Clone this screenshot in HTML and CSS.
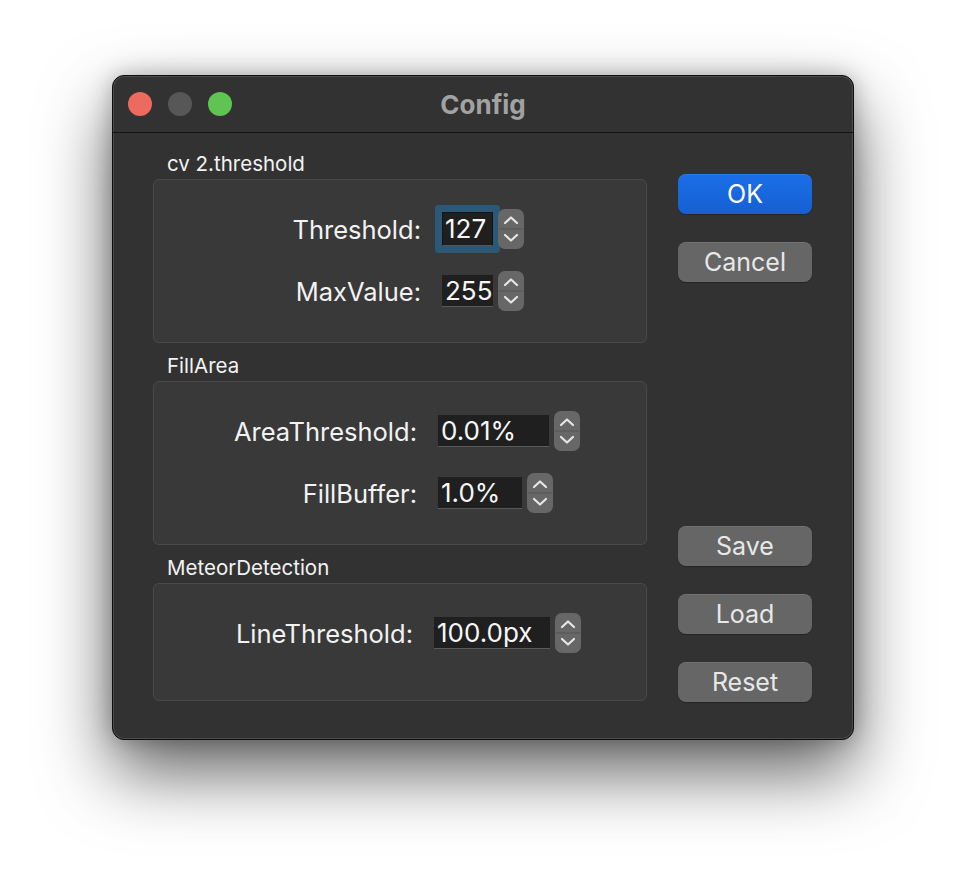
FILE: index.html
```html
<!DOCTYPE html>
<html>
<head>
<meta charset="utf-8">
<title>Config</title>
<link rel="stylesheet" href="styles.css">
</head>
<body>
<div class="stage">
  <div class="window">
    <div class="titlebar">
      <div class="lights">
        <span class="light light-red"></span>
        <span class="light light-grey"></span>
        <span class="light light-green"></span>
      </div>
      <div class="title">Config</div>
      <div class="title-spacer"></div>
    </div>
    <div class="content">
      <div class="groups">
        <section class="group">
          <div class="group-title">cv 2.threshold</div>
          <div class="group-box box-tall labels-a">
            <div class="row">
              <span class="field-label">Threshold:</span>
              <span class="input input-s focused">127</span>
              <span class="stepper"><svg viewBox="0 0 26 40" width="26" height="40"><line x1="1" y1="20" x2="25" y2="20" class="div"/><polyline points="7,14 13,8.5 19,14" class="chev"/><polyline points="7,26 13,31.5 19,26" class="chev"/></svg></span>
            </div>
            <div class="row">
              <span class="field-label">MaxValue:</span>
              <span class="input input-s">255</span>
              <span class="stepper"><svg viewBox="0 0 26 40" width="26" height="40"><line x1="1" y1="20" x2="25" y2="20" class="div"/><polyline points="7,14 13,8.5 19,14" class="chev"/><polyline points="7,26 13,31.5 19,26" class="chev"/></svg></span>
            </div>
          </div>
        </section>
        <section class="group">
          <div class="group-title">FillArea</div>
          <div class="group-box box-tall labels-b">
            <div class="row">
              <span class="field-label">AreaThreshold:</span>
              <span class="input input-l">0.01%</span>
              <span class="stepper"><svg viewBox="0 0 26 40" width="26" height="40"><line x1="1" y1="20" x2="25" y2="20" class="div"/><polyline points="7,14 13,8.5 19,14" class="chev"/><polyline points="7,26 13,31.5 19,26" class="chev"/></svg></span>
            </div>
            <div class="row">
              <span class="field-label">FillBuffer:</span>
              <span class="input input-m">1.0%</span>
              <span class="stepper"><svg viewBox="0 0 26 40" width="26" height="40"><line x1="1" y1="20" x2="25" y2="20" class="div"/><polyline points="7,14 13,8.5 19,14" class="chev"/><polyline points="7,26 13,31.5 19,26" class="chev"/></svg></span>
            </div>
          </div>
        </section>
        <section class="group">
          <div class="group-title">MeteorDetection</div>
          <div class="group-box box-short labels-c">
            <div class="row">
              <span class="field-label">LineThreshold:</span>
              <span class="input input-xl">100.0px</span>
              <span class="stepper"><svg viewBox="0 0 26 40" width="26" height="40"><line x1="1" y1="20" x2="25" y2="20" class="div"/><polyline points="7,14 13,8.5 19,14" class="chev"/><polyline points="7,26 13,31.5 19,26" class="chev"/></svg></span>
            </div>
          </div>
        </section>
      </div>
      <div class="buttons">
        <div class="btn-group">
          <button class="btn btn-primary">OK</button>
          <button class="btn">Cancel</button>
        </div>
        <div class="btn-group">
          <button class="btn">Save</button>
          <button class="btn">Load</button>
          <button class="btn">Reset</button>
        </div>
      </div>
    </div>
  </div>
</div>
</body>
</html>
```
FILE: styles.css
```css
html, body {
  margin: 0;
  padding: 0;
  background: #ffffff;
}
body {
  font-family: Inter, "Liberation Sans", sans-serif;
  width: 966px;
  height: 888px;
  overflow: hidden;
}
.stage {
  padding: 75px 0 0 112px;
}
.window {
  box-sizing: border-box;
  width: 742px;
  height: 665px;
  background: #323232;
  border: 1px solid #0e0e0e;
  border-radius: 12px;
  box-shadow: inset 0 0 0 1px #4c4c4c, 0 32px 70px rgba(0,0,0,0.62), 0 0 22px rgba(0,0,0,0.25);
  display: flex;
  flex-direction: column;
}
.titlebar {
  box-sizing: border-box;
  height: 57px;
  border-bottom: 1px solid #141414;
  display: grid;
  grid-template-columns: 1fr auto 1fr;
  align-items: center;
}
.lights {
  display: flex;
  gap: 16px;
  padding-left: 15px;
}
.light {
  width: 24px;
  height: 24px;
  border-radius: 50%;
  display: block;
}
.light-red { background: #ec6a5e; }
.light-grey { background: #575757; }
.light-green { background: #5fc452; }
.title {
  font-weight: 700;
  font-size: 26px;
  color: #a2a2a2;
}
.content {
  flex: 1;
  display: flex;
  gap: 31px;
  padding: 0 41px 0 40px;
}
.groups {
  width: 494px;
  padding-top: 19px;
  display: flex;
  flex-direction: column;
  gap: 11px;
}
.group-title {
  font-size: 20.5px;
  line-height: 24px;
  color: #f2f2f2;
  padding-left: 14px;
  margin-bottom: 3px;
}
.group-box {
  box-sizing: border-box;
  background: #393939;
  border: 1px solid #4a4a4a;
  border-radius: 6px;
  padding-top: 29px;
  display: flex;
  flex-direction: column;
  gap: 22px;
}
.box-tall { height: 164px; }
.box-short { height: 118px; }
.row {
  display: flex;
  align-items: center;
  height: 40px;
}
.field-label {
  text-align: right;
  font-size: 25.5px;
  color: #f2f2f2;
  margin-right: 21px;
}
.labels-a .field-label { width: 267px; }
.labels-b .field-label { width: 263px; }
.labels-c .field-label { width: 259px; }
.input {
  box-sizing: border-box;
  height: 32px;
  background: #1f1f1f;
  border-bottom: 1px solid #5a5a5a;
  color: #f6f6f6;
  font-size: 26px;
  line-height: 31px;
  padding-left: 3px;
  margin-right: 5px;
  white-space: nowrap;
  overflow: hidden;
}
.input-s { width: 51px; }
.input-m { width: 84px; }
.input-l { width: 111px; }
.input-xl { width: 116px; }
.focused {
  height: 34px;
  border-radius: 1px;
  border: 1px solid #151515;
  border-bottom-color: #555;
  padding-left: 2px;
  box-shadow: 0 0 0 7px #2c5878;
}
.stepper {
  width: 26px;
  height: 40px;
  border-radius: 7px;
  background: #676767;
  display: block;
}
.stepper svg { display: block; }
.stepper .div { stroke: #555555; stroke-width: 1; }
.stepper .chev {
  fill: none;
  stroke: #e6e6e6;
  stroke-width: 2.2;
  stroke-linecap: round;
  stroke-linejoin: round;
}
.buttons {
  width: 134px;
  padding: 41px 0 37px;
  display: flex;
  flex-direction: column;
  justify-content: space-between;
}
.btn-group {
  display: flex;
  flex-direction: column;
  gap: 28px;
}
.btn {
  box-sizing: border-box;
  height: 40px;
  width: 134px;
  border: none;
  border-radius: 8px;
  background: #666666;
  color: #e8e8e8;
  font-family: Inter, "Liberation Sans", sans-serif;
  font-size: 25px;
  padding: 0;
  box-shadow: inset 0 1px 0 rgba(255,255,255,0.08), 0 1px 1px rgba(0,0,0,0.25);
}
.btn-primary {
  background: linear-gradient(#1b6fe7, #165fd3);
  color: #ffffff;
}
```
